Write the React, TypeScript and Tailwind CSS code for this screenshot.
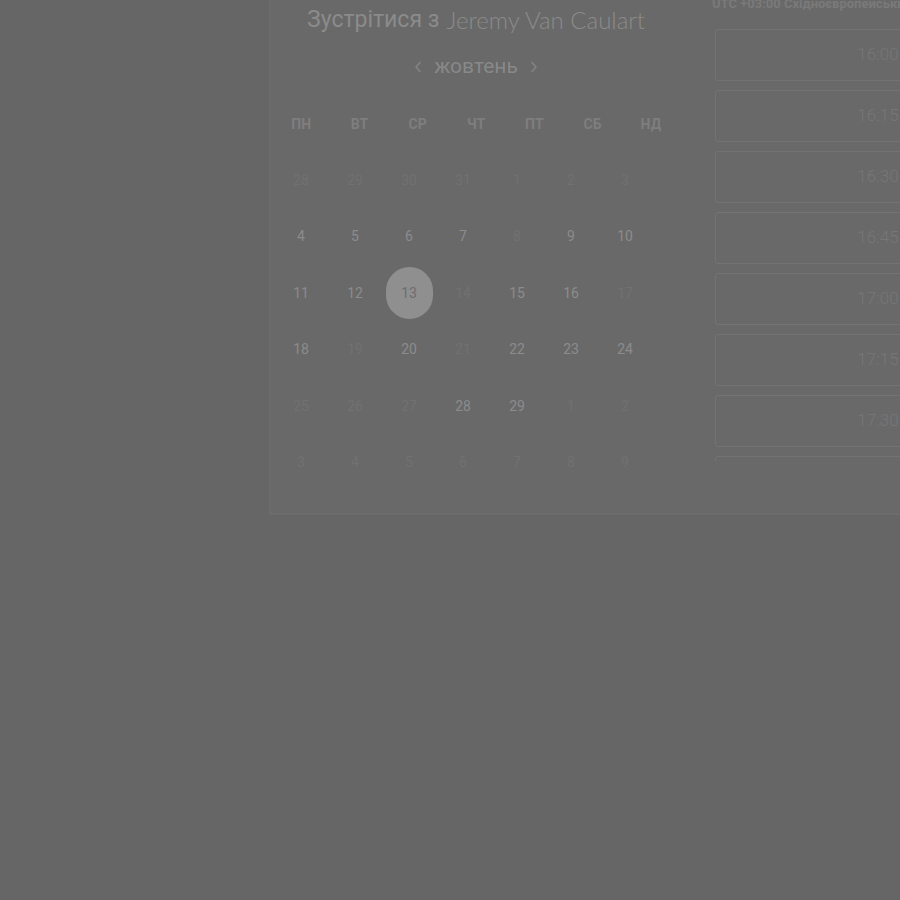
import React from "react"

type Day = { n: number; on?: boolean; sel?: boolean }

const weeks: Day[][] = [
  [{ n: 28 }, { n: 29 }, { n: 30 }, { n: 31 }, { n: 1 }, { n: 2 }, { n: 3 }],
  [{ n: 4, on: true }, { n: 5, on: true }, { n: 6, on: true }, { n: 7, on: true }, { n: 8 }, { n: 9, on: true }, { n: 10, on: true }],
  [{ n: 11, on: true }, { n: 12, on: true }, { n: 13, sel: true }, { n: 14 }, { n: 15, on: true }, { n: 16, on: true }, { n: 17 }],
  [{ n: 18, on: true }, { n: 19 }, { n: 20, on: true }, { n: 21 }, { n: 22, on: true }, { n: 23, on: true }, { n: 24, on: true }],
  [{ n: 25 }, { n: 26 }, { n: 27 }, { n: 28, on: true }, { n: 29, on: true }, { n: 1 }, { n: 2 }],
  [{ n: 3 }, { n: 4 }, { n: 5 }, { n: 6 }, { n: 7 }, { n: 8 }, { n: 9 }],
]

const weekdays = ["ПН", "ВТ", "СР", "ЧТ", "ПТ", "СБ", "НД"]
const slots = ["16:00", "16:15", "16:30", "16:45", "17:00", "17:15", "17:30", "17:45"]

function Chevron({ dir }: { dir: "l" | "r" }) {
  return (
    <svg width="8" height="12" viewBox="0 0 8 12" fill="none">
      <path
        d={dir === "l" ? "M6 1.5L2 6l4 4.5" : "M2 1.5L6 6l-4 4.5"}
        stroke="#848484"
        strokeWidth="1.6"
        strokeLinecap="round"
        strokeLinejoin="round"
      />
    </svg>
  )
}

function Calendar() {
  return (
    <div className="w-[410px] shrink-0 flex flex-col">
      <div className="h-[40px] flex items-center justify-center text-[#8b8b8b]">
        <span className="font-[Roboto,sans-serif] text-[23px]">Зустрітися з</span>
        <span className="ml-[7px] font-[Lato,sans-serif] font-light text-[24px]">Jeremy Van Caulart</span>
      </div>
      <div className="mt-[14px] h-[26px] flex items-center justify-center gap-[12px]">
        <Chevron dir="l" />
        <span className="font-[Roboto,sans-serif] text-[21px] text-[#888888] leading-none pb-[2px]">жовтень</span>
        <Chevron dir="r" />
      </div>
      <div className="mt-[34px] h-[20px] ml-[1px] w-[408px] grid grid-cols-7 items-center text-center font-[Roboto,sans-serif] font-bold text-[14px] text-[#7e7e7e]">
        {weekdays.map((d) => (
          <div key={d}>{d}</div>
        ))}
      </div>
      <div className="mt-[18px] ml-[3px] grid grid-cols-[repeat(7,54px)] font-[Roboto,sans-serif] text-[14px]">
        {weeks.flat().map((d, i) => (
          <div key={i} className="h-[56.5px] flex items-center justify-center">
            {d.sel ? (
              <div className="w-[47px] h-[52px] rounded-full bg-[#8f8f8f] flex items-center justify-center text-[#6d6d6d]">
                {d.n}
              </div>
            ) : (
              <span className={d.on ? "text-[#8c8c8c]" : "text-[#717171]"}>{d.n}</span>
            )}
          </div>
        ))}
      </div>
    </div>
  )
}

function Times() {
  return (
    <div className="flex-1 flex flex-col pl-[31px] -mt-[4px]">
      <div className="h-[16px] whitespace-nowrap font-[Roboto,sans-serif] font-bold text-[13px] leading-[16px] text-[#7a7a7a]">
        UTC +03:00 Східноєвропейський час
      </div>
      <div className="mt-[17px] pl-[3px] h-[432px] overflow-hidden flex flex-col gap-[9px]">
        {slots.map((s) => (
          <div
            key={s}
            className="shrink-0 w-[326px] h-[52px] rounded-[3px] border border-[#737373] flex items-center justify-center font-[Roboto,sans-serif] font-light text-[17px] text-[#777777]"
          >
            {s}
          </div>
        ))}
      </div>
    </div>
  )
}

export default function App() {
  return (
    <div className="w-[900px] h-[900px] overflow-hidden bg-[#666666]">
      <div className="ml-[269px] w-[700px] h-[515px] flex bg-[#696969] border-l-2 border-b-2 border-[#6c6c6c]">
        <Calendar />
        <Times />
      </div>
    </div>
  )
}
